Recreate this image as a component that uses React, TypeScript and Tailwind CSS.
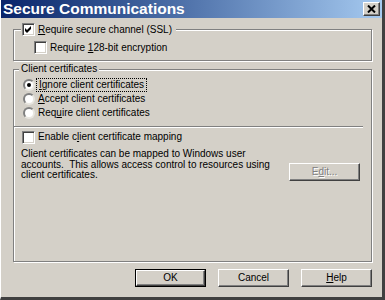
import React from 'react';

const raised =
  'border border-t-white border-l-white border-b-[#404040] border-r-[#404040] shadow-[inset_-1px_-1px_0_#808080,inset_1px_1px_0_#d4d0c8]';

function CheckBox({ checked = false }: { checked?: boolean }) {
  return (
    <span className="w-[13px] h-[13px] shrink-0 bg-white border border-t-[#808080] border-l-[#808080] border-b-white border-r-white shadow-[inset_1px_1px_0_#404040,inset_-1px_-1px_0_#d4d0c8] flex items-center justify-center">
      {checked && (
        <svg width="9" height="9" viewBox="0 0 9 9">
          <polygon points="1,3 3,5 7,1 7,4 3,8 1,6" fill="#000" />
        </svg>
      )}
    </span>
  );
}

function Radio({ checked = false }: { checked?: boolean }) {
  return (
    <span className="w-[12px] h-[12px] shrink-0 rounded-full bg-white border-2 border-t-[#808080] border-l-[#808080] border-b-[#e8e6e0] border-r-[#e8e6e0] flex items-center justify-center">
      {checked && <span className="w-[4px] h-[4px] rounded-full bg-black" />}
    </span>
  );
}

function Button({
  children,
  isDefault = false,
  disabled = false,
}: {
  children: React.ReactNode;
  isDefault?: boolean;
  disabled?: boolean;
}) {
  const inner = (
    <span
      className={`w-full h-full flex items-center justify-center ${raised} ${
        disabled ? 'text-[#808080] [text-shadow:1px_1px_0_#fff]' : 'text-black'
      }`}
    >
      {children}
    </span>
  );
  if (isDefault) {
    return <div className="w-[71px] h-[18px] border border-black flex">{inner}</div>;
  }
  return <div className="w-[71px] h-[18px] flex">{inner}</div>;
}

export default function App() {
  return (
    <div className="w-[385px] h-[300px] bg-[#d4d0c8] flex flex-col border-l border-l-white border-r-[3px] border-r-[#404040] border-b-[3px] border-b-[#404040] font-['Liberation_Sans',Arial,sans-serif] text-[10px] text-black leading-none overflow-hidden">
      {/* title bar */}
      <div className="h-[18px] shrink-0 flex items-center justify-between pl-[2px] pr-[2px] bg-linear-to-r from-[#0a246a] to-[#a6caf0]">
        <span className="text-white font-bold text-[15.5px] leading-none">Secure Communications</span>
        <span className={`w-[17px] h-[14px] bg-[#d4d0c8] flex items-center justify-center ${raised}`}>
          <svg width="9" height="8" viewBox="0 0 9 8">
            <path d="M1 0.5 L8 7.5 M8 0.5 L1 7.5" stroke="#000" strokeWidth="2" />
          </svg>
        </span>
      </div>

      <div className="flex flex-col pl-[12px]">
        {/* SSL group */}
        <div className="relative mt-[11px] w-[359px] h-[32px] border border-[#808080] shadow-[inset_1px_1px_0_#fff,1px_1px_0_#fff]">
          <div className="absolute left-[7px] -top-[7px] h-[13px] flex items-center gap-[3px] pl-[1px] pr-[4px] bg-[#d4d0c8]">
            <CheckBox checked />
            <span>
              <u>R</u>equire secure channel (SSL)
            </span>
          </div>
          <div className="flex items-center gap-[3px] pl-[20px] pt-[11px]">
            <CheckBox />
            <span>
              Require <u>1</u>28-bit encryption
            </span>
          </div>
        </div>

        {/* client certificates group */}
        <div className="relative mt-[8px] w-[359px] h-[193px] border border-[#808080] shadow-[inset_1px_1px_0_#fff,1px_1px_0_#fff] flex flex-col">
          <div className="absolute left-[5px] -top-[7px] h-[12px] flex items-center px-[2px] bg-[#d4d0c8]">
            Client certificates
          </div>
          <div className="flex flex-col pt-[8px] pl-[9px]">
            <div className="h-[14px] flex items-center gap-[3px]">
              <Radio checked />
              <span className="outline-1 outline-dotted outline-black outline-offset-[1px] px-[1px]">
                <u>I</u>gnore client certificates
              </span>
            </div>
            <div className="h-[14px] flex items-center gap-[3px]">
              <Radio />
              <span>
                <u>A</u>ccept client certificates
              </span>
            </div>
            <div className="h-[14px] flex items-center gap-[3px]">
              <Radio />
              <span>
                Req<u>u</u>ire client certificates
              </span>
            </div>
          </div>
          <div className="mt-[6px] w-[349px] h-[2px] border-t border-t-[#808080] border-b border-b-white" />
          <div className="mt-[2px] h-[14px] flex items-center gap-[3px] pl-[8px]">
            <CheckBox />
            <span>
              Enable c<u>l</u>ient certificate mapping
            </span>
          </div>
          <div className="mt-[5px] flex justify-between pl-[7px] pr-[11px]">
            <p className="leading-[10.5px] whitespace-pre">
              {'Client certificates can be mapped to Windows user\naccounts.  This allows access control to resources using\nclient certificates.'}
            </p>
            <div className="mt-[14px]">
              <Button disabled>
                <span>
                  E<u>d</u>it...
                </span>
              </Button>
            </div>
          </div>
        </div>

        {/* dialog buttons */}
        <div className="mt-[7px] w-[359px] flex justify-end gap-[12px]">
          <Button isDefault>OK</Button>
          <Button>Cancel</Button>
          <Button>
            <span>
              <u>H</u>elp
            </span>
          </Button>
        </div>
      </div>
    </div>
  );
}
